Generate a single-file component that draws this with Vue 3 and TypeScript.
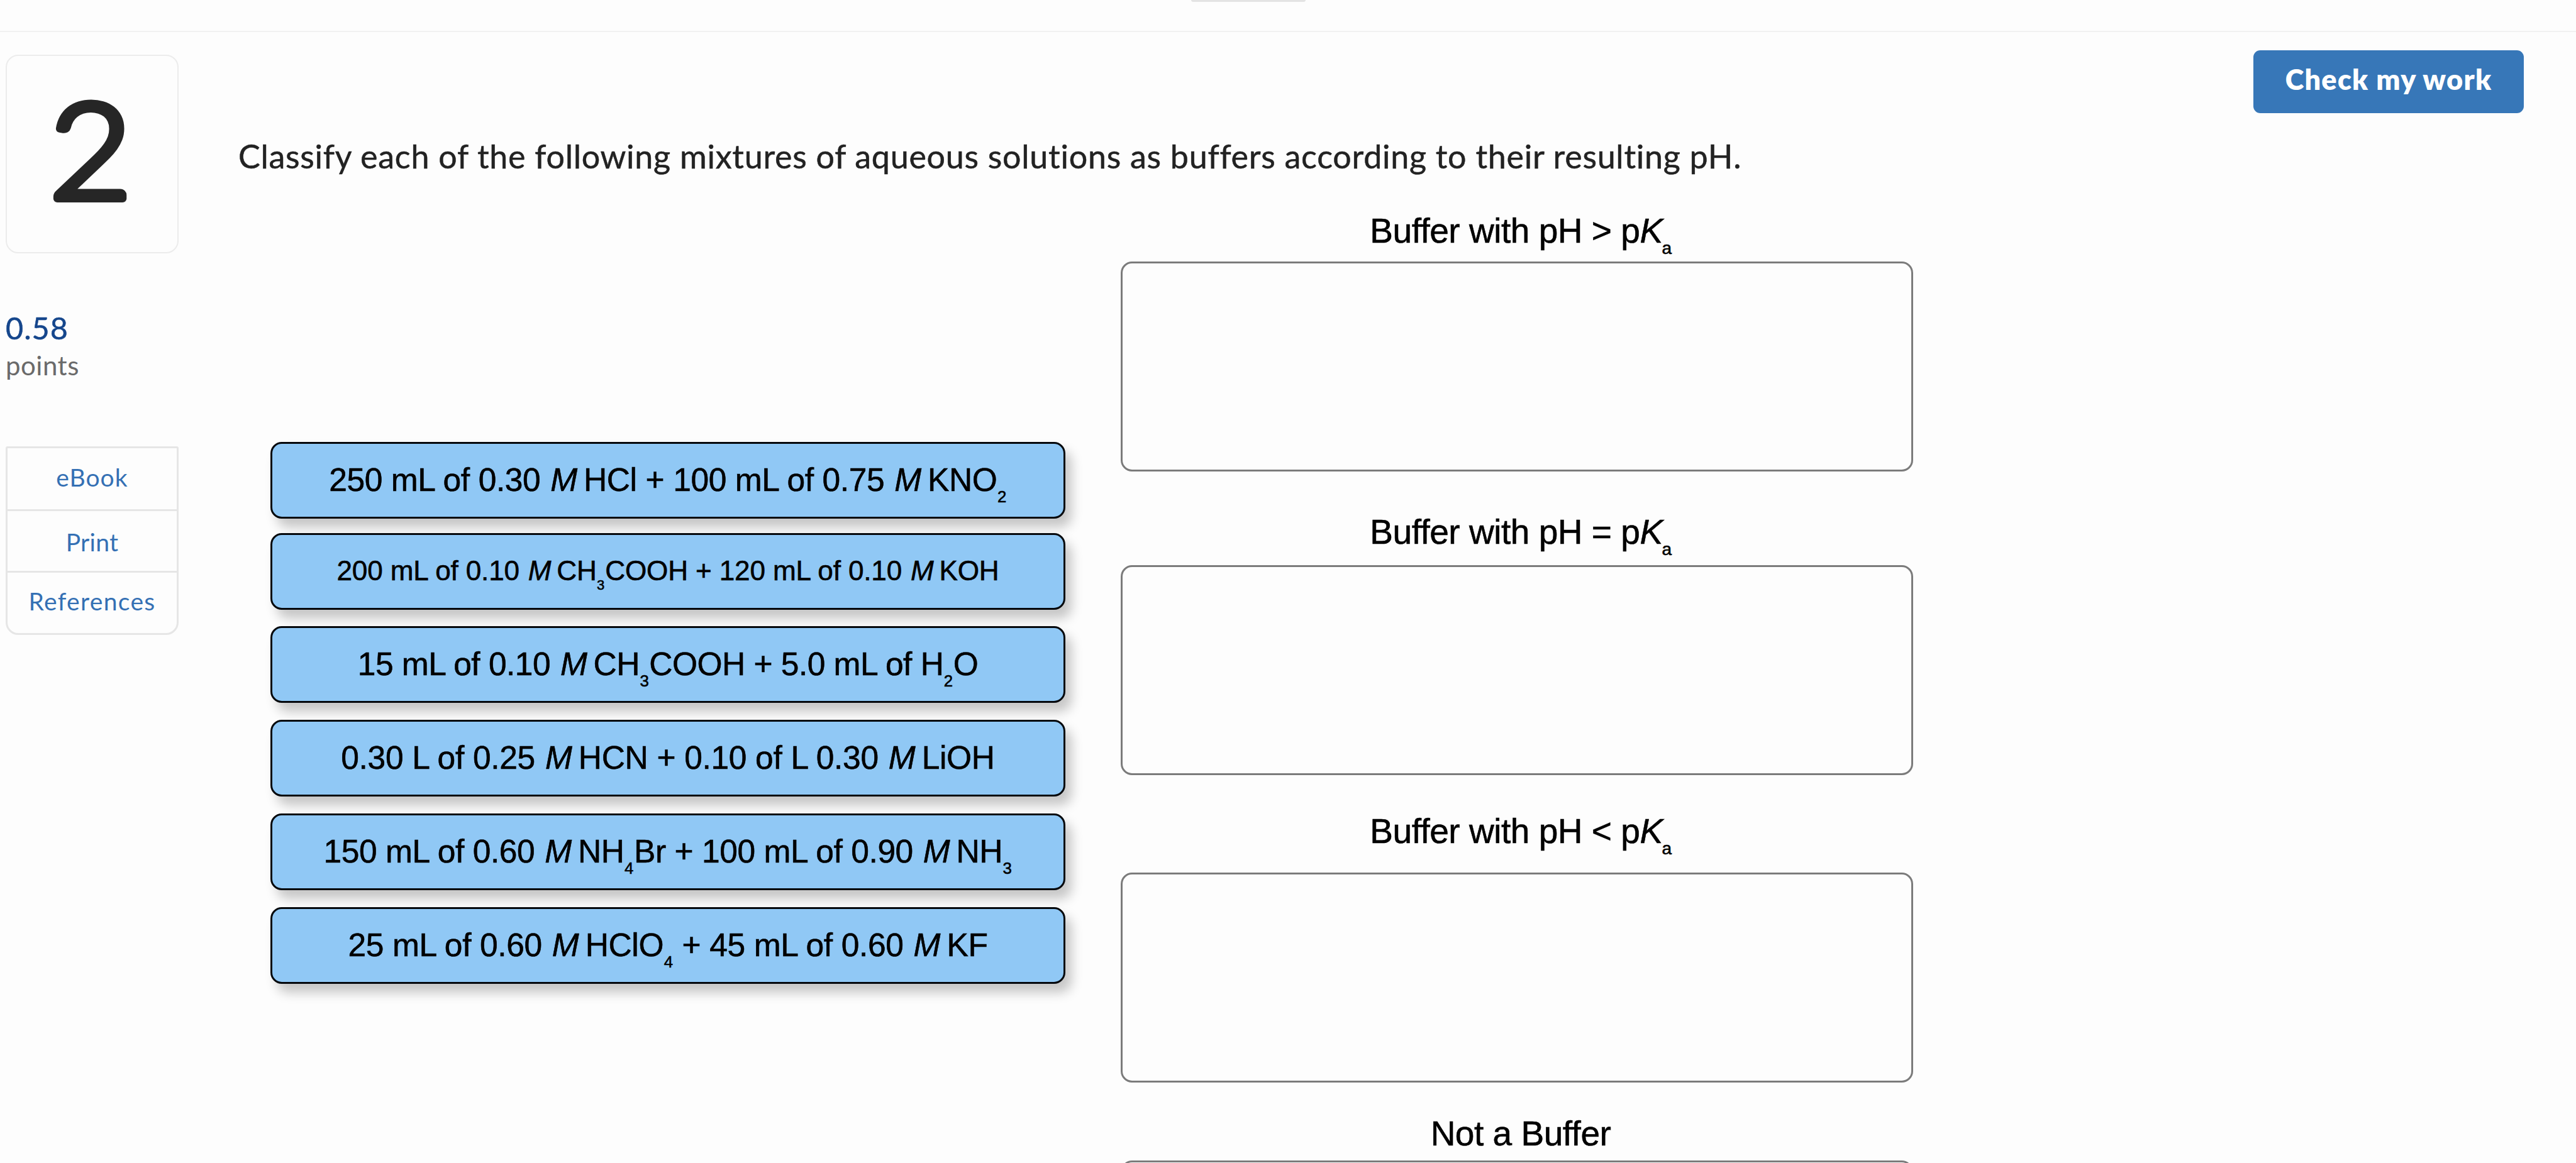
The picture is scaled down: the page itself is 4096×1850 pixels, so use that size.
<script setup lang="ts">
type Kind = 'text' | 'italic' | 'sub'
interface Part { kind: Kind; value: string }
interface Mixture { parts: Part[]; tracking: number; compact?: boolean }

// Markup: *x* is italic, _x_ is a subscript
function parse(source: string): Part[] {
  return source
    .split(/(\*[^*]+\*|_[^_]+_)/)
    .filter((s) => s !== '')
    .map((s) => {
      if (s.startsWith('*')) return { kind: 'italic', value: s.slice(1, -1) }
      if (s.startsWith('_')) return { kind: 'sub', value: s.slice(1, -1) }
      return { kind: 'text', value: s }
    })
}

const links = ['eBook', 'Print', 'References']

const mixtures: Mixture[] = [
  { parts: parse('250 mL of 0.30 *M*HCl + 100 mL of 0.75 *M*KNO_2_'), tracking: -0.4 },
  { parts: parse('200 mL of 0.10 *M*CH_3_COOH + 120 mL of 0.10 *M*KOH'), tracking: -0.15, compact: true },
  { parts: parse('15 mL of 0.10 *M*CH_3_COOH + 5.0 mL of H_2_O'), tracking: -0.52 },
  { parts: parse('0.30 L of 0.25 *M*HCN + 0.10 of L 0.30 *M*LiOH'), tracking: -0.32 },
  { parts: parse('150 mL of 0.60 *M*NH_4_Br + 100 mL of 0.90 *M*NH_3_'), tracking: -0.42 },
  { parts: parse('25 mL of 0.60 *M*HClO_4_ + 45 mL of 0.60 *M*KF'), tracking: -0.36 },
]

const bins = [
  'Buffer with pH > p*K*_a_',
  'Buffer with pH = p*K*_a_',
  'Buffer with pH < p*K*_a_',
  'Not a Buffer',
].map(parse)
</script>

<template>
  <div class="page">
    <header class="strip"><div class="tab"></div></header>
    <div class="body">
      <aside class="side">
        <div class="number">
          <svg class="digit" viewBox="0 0 270 312" width="270" height="312" aria-label="Question 2">
            <text transform="translate(133 227) scale(1.07 1)" text-anchor="middle">2</text>
          </svg>
        </div>
        <div class="score">0.58</div>
        <div class="unit">points</div>
        <nav class="links">
          <a v-for="l in links" :key="l" :class="['link', l.toLowerCase()]">{{ l }}</a>
        </nav>
      </aside>
      <main class="main">
        <div class="top">
          <p class="question">Classify each of the following mixtures of aqueous solutions as buffers according to their resulting pH.</p>
          <button class="check" type="button">Check my work</button>
        </div>
        <div class="work">
          <div class="tiles">
            <div v-for="(m, i) in mixtures" :key="i" class="tile" :class="{ compact: m.compact }">
              <span class="formula" :style="{ letterSpacing: m.tracking + 'px' }"><span v-for="(p, j) in m.parts" :key="j" :class="p.kind">{{ p.value }}</span></span>
            </div>
          </div>
          <div class="bins">
            <template v-for="(b, i) in bins" :key="i">
              <h2 class="label"><span v-for="(p, j) in b" :key="j" :class="p.kind">{{ p.value }}</span></h2>
              <div class="bin"></div>
            </template>
          </div>
        </div>
      </main>
    </div>
  </div>
</template>

<style>
html, body { background: #fdfdfd; overflow: hidden; }
</style>

<style scoped>
.page {
  width: 4096px;
  height: 1850px;
  overflow: hidden;
  background: #fdfdfd;
  font-family: Lato, "Open Sans", sans-serif;
  color: #222;
}
.strip {
  box-sizing: border-box;
  height: 51px;
  border-bottom: 2px solid #f1f1f1;
}
.tab {
  width: 182px;
  height: 3px;
  margin-left: 1894px;
  background: #e4e4e4;
  border-radius: 0 0 3px 3px;
}
.body { display: flex; }
.side {
  width: 275px;
  padding: 36px 97px 0 9px;
  flex: none;
}
.number {
  box-sizing: border-box;
  width: 275px;
  height: 316px;
  border: 2px solid #ececec;
  border-radius: 20px;
}
.digit { display: block; }
.digit text {
  font-family: Lato, sans-serif;
  font-weight: 300;
  font-size: 212px;
  fill: #262626;
  stroke: #262626;
  stroke-width: 12px;
  stroke-linejoin: round;
}
.score {
  margin-top: 90px;
  font-size: 48.5px;
  line-height: 56px;
  letter-spacing: 1px;
  color: #15468c;
  -webkit-text-stroke: 0.5px currentColor;
}
.unit {
  margin-top: 7px;
  font-size: 42px;
  line-height: 50px;
  letter-spacing: 0.5px;
  color: #6a6a6a;
}
.links {
  box-sizing: border-box;
  height: 300px;
  margin-top: 104px;
  display: grid;
  grid-template-rows: 100px 98px 1fr;
  border: 3px solid #e6e6e6;
  border-radius: 3px 3px 20px 20px;
}
.link {
  box-sizing: border-box;
  display: flex;
  align-items: center;
  justify-content: center;
  border-bottom: 3px solid #e6e6e6;
  font-size: 39px;
  letter-spacing: 0.3px;
  color: #3470b4;
}
.link:last-child { border-bottom: 0; }
.ebook { padding-bottom: 5px; letter-spacing: 1.1px; }
.print { padding-top: 3px; }
.references { padding-bottom: 7px; letter-spacing: 1.35px; }
.main { flex: 1; }
.top {
  display: flex;
  justify-content: space-between;
  align-items: flex-start;
  height: 286px;
}
.question {
  margin: 167px 0 0 -2px;
  font-size: 52px;
  line-height: 60px;
  letter-spacing: 0.74px;
  white-space: nowrap;
  -webkit-text-stroke: 0.5px currentColor;
}
.check {
  width: 430px;
  height: 100px;
  margin: 29px 83px 0 0;
  padding: 0 0 8px;
  border: 0;
  border-radius: 11px;
  background: #3777b8;
  color: #fff;
  font: 800 45px Lato, sans-serif;
  letter-spacing: 1.3px;
}
.work {
  display: flex;
  align-items: flex-start;
  padding-left: 49px;
  font-family: "Liberation Sans", Arial, sans-serif;
  color: #000;
  -webkit-text-stroke: 0.6px #000;
}
.tiles {
  display: grid;
  grid-template-rows: 145px 148px 149px 149px 149px 122px;
  width: 1264px;
  margin-top: 366px;
}
.tile {
  box-sizing: border-box;
  height: 122px;
  display: flex;
  align-items: center;
  justify-content: center;
  padding-bottom: 2px;
  border: 3px solid #05080c;
  border-radius: 18px;
  background: #90c8f5;
  box-shadow: 10px 14px 18px rgba(0, 0, 0, 0.22);
  font-size: 51.5px;
}
.compact { font-size: 44.1px; }
.formula { white-space: pre; line-height: 60px; }
.italic { font-style: italic; }
.formula .italic { margin: 0 0.2em 0 0.04em; }
.sub {
  font-size: 0.5em;
  line-height: 0;
  vertical-align: -0.68em;
  padding: 0 1px 0 0.5px;
}
.bins {
  display: grid;
  grid-template-columns: 1260px;
  grid-template-rows: 79px 400px 83px 393px 96px 385px 73px 334px;
  margin-left: 88px;
}
.label {
  margin: 0;
  padding-left: 12px;
  font-size: 55px;
  font-weight: 400;
  line-height: 60px;
  letter-spacing: -0.48px;
  text-align: center;
  white-space: pre;
}
.label .sub { font-size: 28px; vertical-align: -18px; padding: 0; margin-left: -1px; }
.bin {
  box-sizing: border-box;
  height: 334px;
  border: 3px solid #7b7b7b;
  border-radius: 18px;
}
</style>
